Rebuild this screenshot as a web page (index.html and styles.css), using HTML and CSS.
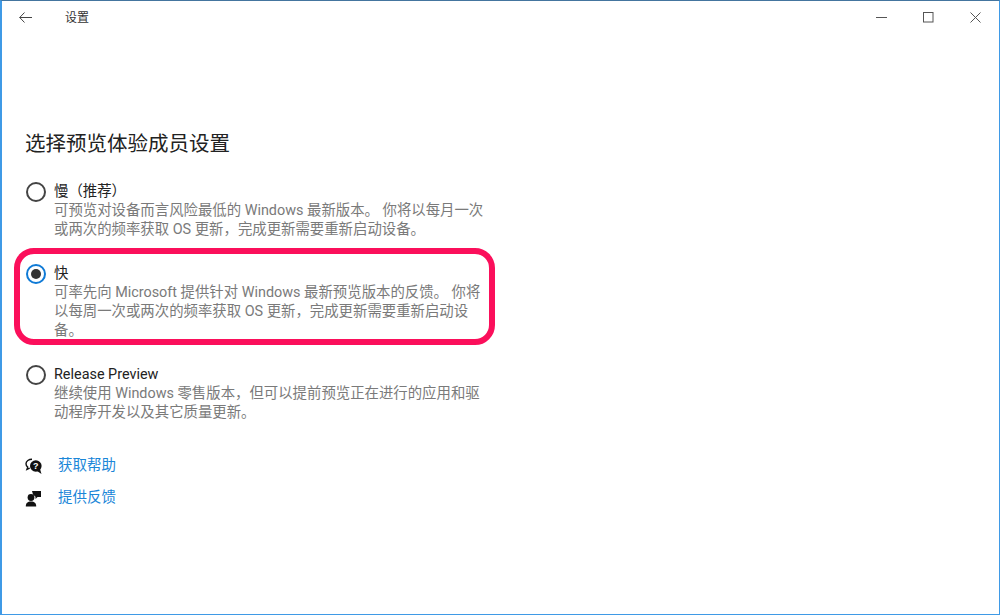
FILE: index.html
```html
<!DOCTYPE html>
<html lang="zh-CN">
<head>
<meta charset="utf-8">
<title>设置</title>
<link rel="stylesheet" href="styles.css">
</head>
<body>
<div class="window">
  <header class="titlebar">
    <div class="title-left">
      <svg class="back" width="13" height="11" viewBox="0 0 13 11"><path d="M5.500.5 .7 5.500l4.800 5M.7 5.500H13" fill="none" stroke="#444" stroke-width="1"/></svg>
      <span class="app-title">设置</span>
    </div>
    <div class="controls">
      <svg width="11" height="11" viewBox="0 0 11 11"><path d="M0 5.500h11" stroke="#555" stroke-width="1"/></svg>
      <svg width="11" height="11" viewBox="0 0 11 11"><rect x=".5" y=".5" width="9.500" height="9.500" fill="none" stroke="#555"/></svg>
      <svg width="11" height="11" viewBox="0 0 11 11"><path d="M.5.500l10 10M10.500.500l-10 10" stroke="#555" stroke-width="1"/></svg>
    </div>
  </header>
  <main class="content">
    <h1 class="heading">选择预览体验成员设置</h1>
    <div class="options">
      <div class="option">
        <span class="radio"></span>
        <div class="option-body">
          <div class="option-title">慢（推荐）</div>
          <p class="option-desc">可预览对设备而言风险最低的 Windows 最新版本。 你将以每月一次或两次的频率获取 OS 更新，完成更新需要重新启动设备。</p>
        </div>
      </div>
      <div class="option option-marked">
        <span class="radio radio-on"></span>
        <div class="option-body">
          <div class="option-title">快</div>
          <p class="option-desc">可率先向 Microsoft 提供针对 Windows 最新预览版本的反馈。 你将以每周一次或两次的频率获取 OS 更新，完成更新需要重新启动设备。</p>
        </div>
        <div class="highlight"></div>
      </div>
      <div class="option">
        <span class="radio"></span>
        <div class="option-body">
          <div class="option-title">Release Preview</div>
          <p class="option-desc">继续使用 Windows 零售版本，但可以提前预览正在进行的应用和驱动程序开发以及其它质量更新。</p>
        </div>
      </div>
    </div>
    <nav class="links">
      <a class="link">
        <svg class="link-icon" width="18" height="17" viewBox="0 0 18 17"><path d="M7 1.200C3.800 1.200 1 3.100 1 5.800c0 1.300.6 2.500 1.700 3.300L1.900 11.500l2.800-1.300" fill="none" stroke="#111" stroke-width="1.400"/><circle cx="10.800" cy="8" r="5.800" fill="#111"/><path d="M12 13l4.500 3-1.500-5z" fill="#111"/><text x="10.800" y="11.200" class="qmark">?</text></svg>
        <span>获取帮助</span>
      </a>
      <a class="link">
        <svg class="link-icon" width="18" height="17" viewBox="0 0 18 17"><circle cx="6" cy="7.500" r="3.400" fill="#111"/><path d="M.8 16.500c0-3.600 1.800-5 5.200-5s5.200 1.400 5.200 5z" fill="#111"/><path d="M7 1h9v6h-3.500L10.500 9V6.800L8 4.500z" fill="#111"/></svg>
        <span>提供反馈</span>
      </a>
    </nav>
  </main>
</div>
</body>
</html>
```
FILE: styles.css
```css
* { box-sizing: border-box; }
html, body { margin: 0; height: 100%; }
body {
  background: #fff;
  font-family: Roboto, "Noto Sans CJK SC", sans-serif;
  overflow: hidden;
}
.window {
  width: 1000px;
  height: 615px;
  border: 1px solid #3f9ae6;
  border-top-color: #44759f;
  border-left-width: 2px;
  background: #fff;
  display: flex;
  flex-direction: column;
}
.titlebar {
  height: 32px;
  display: flex;
  align-items: center;
  justify-content: space-between;
  flex: none;
}
.title-left { display: flex; align-items: center; }
.back { margin-left: 17px; margin-top: 1px; }
.app-title {
  margin-left: 33px;
  margin-bottom: 2px;
  font-size: 12px;
  color: #333;
}
.controls {
  display: flex;
  gap: 36px;
  margin-right: 18px;
  align-items: center;
}
.content {
  padding: 0 0 0 23px;
  flex: 1;
}
.heading {
  margin: 95px 0 0;
  font-size: 20.500px;
  line-height: 32px;
  font-weight: 400;
  color: #222;
  height: 32px;
}
.options {
  margin-top: 21px;
  display: flex;
  flex-direction: column;
  gap: 24px;
}
.option {
  position: relative;
  display: flex;
  gap: 8px;
  width: 459px;
}
.radio {
  flex: none;
  width: 20px;
  height: 20px;
  margin: 1px 0 0 1px;
  border: 2.500px solid #444;
  border-radius: 50%;
  background: #fff;
}
.radio-on {
  border-color: #0f7ad6;
  position: relative;
}
.radio-on::after {
  content: "";
  position: absolute;
  left: 2.500px;
  top: 2.500px;
  width: 10px;
  height: 10px;
  border-radius: 50%;
  background: #333;
}
.option-body { flex: 1; min-width: 0; padding-top: 1px; }
.option-title {
  font-size: 14.400px;
  line-height: 19px;
  color: #222;
}
.option-desc {
  margin: 0;
  font-size: 14.400px;
  line-height: 19px;
  color: #7a7a7a;
}
.highlight {
  position: absolute;
  left: -11px;
  top: -15px;
  width: 481px;
  height: 97px;
  border: 6px solid #fb0f5b;
  border-radius: 20px;
  pointer-events: none;
}
.links {
  margin-top: 34px;
  display: flex;
  flex-direction: column;
  gap: 12px;
}
.link {
  display: flex;
  align-items: center;
  gap: 15px;
  font-size: 14.500px;
  line-height: 20px;
  color: #1a86d8;
}
.qmark {
  fill: #fff;
  font-size: 9px;
  font-weight: 700;
  text-anchor: middle;
  font-family: "Liberation Sans", sans-serif;
}
```
